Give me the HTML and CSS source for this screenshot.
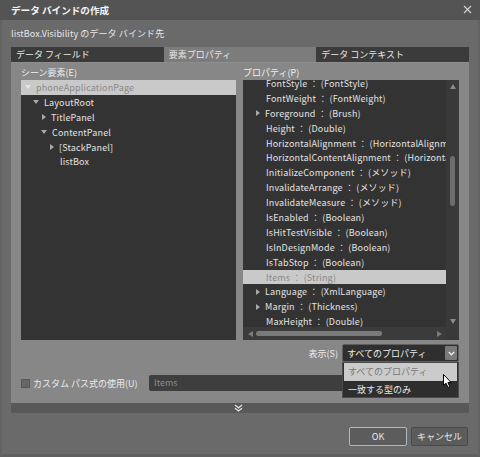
FILE: index.html
```html
<!DOCTYPE html>
<html lang="ja">
<head>
<meta charset="utf-8">
<title>データ バインドの作成</title>
<link rel="stylesheet" href="styles.css">
</head>
<body>
<div class="window">
  <div class="titlebar">
    <span class="title">データ バインドの作成</span>
    <svg class="close" width="9" height="9" viewBox="0 0 9 9"><path d="M1 1 L8 8 M8 1 L1 8" stroke="#d0d0d0" stroke-width="1.2" fill="none"/></svg>
  </div>
  <div class="content">
    <div class="target">listBox.Visibility のデータ バインド先</div>
    <div class="tabs">
      <div class="tab">データ フィールド</div>
      <div class="tab active">要素プロパティ</div>
      <div class="tab">データ コンテキスト</div>
    </div>
    <div class="panel">
      <div class="cols">
        <div class="col">
          <div class="label">シーン要素(E)</div>
          <div class="tree">
            <div class="trow selected lvl0"><span class="arr down light"></span>phoneApplicationPage</div>
            <div class="trow lvl1"><span class="arr down"></span>LayoutRoot</div>
            <div class="trow lvl2"><span class="arr right"></span>TitlePanel</div>
            <div class="trow lvl2"><span class="arr down"></span>ContentPanel</div>
            <div class="trow lvl3"><span class="arr right"></span>[StackPanel]</div>
            <div class="trow lvl3"><span class="arr none"></span>listBox</div>
          </div>
        </div>
        <div class="col">
          <div class="label">プロパティ(P)</div>
          <div class="props">
            <div class="view">
              <div class="plist">
                <div class="prow"><span class="arr none"></span>FontStyle ： (FontStyle)</div>
                <div class="prow"><span class="arr none"></span>FontWeight ： (FontWeight)</div>
                <div class="prow"><span class="arr right"></span>Foreground ： (Brush)</div>
                <div class="prow"><span class="arr none"></span>Height ： (Double)</div>
                <div class="prow"><span class="arr none"></span>HorizontalAlignment ： (HorizontalAlignment)</div>
                <div class="prow"><span class="arr none"></span>HorizontalContentAlignment ： (HorizontalAlignment)</div>
                <div class="prow"><span class="arr none"></span>InitializeComponent ： (メソッド)</div>
                <div class="prow"><span class="arr none"></span>InvalidateArrange ： (メソッド)</div>
                <div class="prow"><span class="arr none"></span>InvalidateMeasure ： (メソッド)</div>
                <div class="prow"><span class="arr none"></span>IsEnabled ： (Boolean)</div>
                <div class="prow"><span class="arr none"></span>IsHitTestVisible ： (Boolean)</div>
                <div class="prow"><span class="arr none"></span>IsInDesignMode ： (Boolean)</div>
                <div class="prow"><span class="arr none"></span>IsTabStop ： (Boolean)</div>
                <div class="prow selected"><span class="arr none"></span>Items ： (String)</div>
                <div class="prow"><span class="arr right"></span>Language ： (XmlLanguage)</div>
                <div class="prow"><span class="arr right"></span>Margin ： (Thickness)</div>
                <div class="prow"><span class="arr none"></span>MaxHeight ： (Double)</div>
              </div>
            </div>
            <div class="vscroll">
              <span class="tri up"></span>
              <div class="vtrack"><div class="vthumb"></div></div>
              <span class="tri dn"></span>
            </div>
            <div class="hscroll">
              <span class="tri lt"></span>
              <div class="htrack"><div class="hthumb"></div></div>
              <span class="tri rt"></span>
            </div>
            <div class="corner"></div>
          </div>
        </div>
      </div>
      <div class="show-row">
        <span class="show-label">表示(S)</span>
        <div class="select">
          <span class="select-text">すべてのプロパティ</span>
          <span class="select-btn">
            <svg width="7" height="5" viewBox="0 0 7 5"><path d="M0.8 1 L3.5 3.8 L6.2 1" stroke="#f0f0f0" stroke-width="1.3" fill="none"/></svg>
          </span>
          <div class="menu">
            <div class="mitem hot">すべてのプロパティ</div>
            <div class="mitem">一致する型のみ</div>
          </div>
          <svg class="cursor" width="10" height="15" viewBox="0 0 10 15"><path d="M0.5 0.5 L0.5 11.5 L3 9.2 L5 13.5 L6.8 12.7 L4.9 8.6 L8.2 8.6 Z" fill="#fff" stroke="#000" stroke-width="1"/></svg>
        </div>
      </div>
      <div class="path-row">
        <span class="check"></span>
        <span class="path-label">カスタム パス式の使用(U)</span>
        <div class="path-input">Items</div>
      </div>
      <div class="expander">
        <svg width="9" height="8" viewBox="0 0 9 8"><path d="M1 1 L4.5 3.8 L8 1 M1 4.2 L4.5 7 L8 4.2" stroke="#e0e0e0" stroke-width="1.3" fill="none"/></svg>
      </div>
    </div>
    <div class="buttons">
      <div class="btn ok">OK</div>
      <div class="btn">キャンセル</div>
    </div>
  </div>
</div>
</body>
</html>
```

FILE: styles.css
```css
* { box-sizing: border-box; margin: 0; padding: 0; }
html, body { width: 480px; height: 457px; overflow: hidden; }
body {
  font-family: "Noto Sans CJK JP", "Noto Sans", sans-serif;
  font-size: 9px;
  color: #e6e6e6;
  background: #6a6a6a;
}
.window {
  width: 480px;
  height: 457px;
  display: flex;
  flex-direction: column;
  background: #6a6a6a;
}
.titlebar {
  height: 20px;
  flex: none;
  background: #545454;
  display: flex;
  align-items: center;
  justify-content: space-between;
  padding: 0 8px 1px 11px;
}
.title { font-weight: bold; font-size: 9.6px; color: #f4f4f4; }
.close { display: block; }
.content {
  flex: 1;
  display: flex;
  flex-direction: column;
  border-left: 2px solid #636363;
  border-right: 2px solid #636363;
  border-bottom: 3px solid #5f5f5f;
  padding-left: 9px;
  padding-right: 9px;
}
.target {
  height: 27px;
  line-height: 28px;
  color: #e8e8e8;
  letter-spacing: 0.1px;
}
.tabs {
  height: 15px;
  display: flex;
}
.tab {
  flex: 1;
  background: #3b3b3b;
  line-height: 15px;
  padding-left: 5px;
  color: #e8e8e8;
}
.tab.active { background: #7c7c7c; }
.panel {
  background: #878787;
  display: flex;
  flex-direction: column;
  padding: 0 10px 0 10px;
  border-top: 1px solid #8e8e8e;
}
.cols {
  display: flex;
  gap: 7px;
}
.col { flex: 1; display: flex; flex-direction: column; }
.col:first-child { flex: 0 0 215px; }
.col:last-child { flex: 0 0 216px; }
.label {
  height: 17px;
  line-height: 19px;
  color: #f0f0f0;
}
.tree, .props {
  height: 260px;
  background: #333333;
  overflow: hidden;
}
.trow, .prow {
  height: 14.9px;
  line-height: 13px;
  white-space: nowrap;
  display: flex;
  align-items: center;
  color: #e2e2e2;
  letter-spacing: 0.15px;
}
.trow.selected, .prow.selected { background: #c9c9c9; color: #8a8a8a; }
.arr { display: inline-block; width: 0; height: 0; flex: none; }
.arr.down {
  border-left: 3px solid transparent;
  border-right: 3px solid transparent;
  border-top: 4px solid #a9a9a9;
  margin-right: 5px;
}
.arr.down.light { border-top-color: #e4e4e4; }
.arr.right {
  border-top: 3px solid transparent;
  border-bottom: 3px solid transparent;
  border-left: 4px solid #a9a9a9;
  margin-right: 5px;
  margin-left: 1px;
}
.arr.none { width: 6px; margin-right: 5px; }
.lvl0 { padding-left: 4px; }
.lvl1 { padding-left: 12px; }
.lvl2 { padding-left: 20px; }
.lvl3 { padding-left: 28px; }
.props {
  display: grid;
  grid-template-columns: 1fr 13px;
  grid-template-rows: 1fr 13px;
}
.view { overflow: hidden; }
.plist { margin-top: -4px; }
.prow { padding-left: 12px; }
.vscroll {
  background: #393939;
  display: flex;
  flex-direction: column;
  align-items: center;
  padding: 4px 0 3px;
}
.vtrack { flex: 1; width: 5px; }
.vthumb {
  margin-top: 67px;
  height: 50px;
  width: 5px;
  border-radius: 3px;
  background: #6d6d6d;
}
.hscroll {
  background: #3b3b3b;
  display: flex;
  align-items: center;
  padding: 0 4px 0 5px;
}
.htrack { flex: 1; height: 5px; }
.hthumb {
  margin-left: 3px;
  width: 126px;
  height: 5px;
  border-radius: 3px;
  background: #7a7a7a;
}
.corner { background: #393939; }
.tri { display: block; width: 0; height: 0; flex: none; }
.tri.up { border-left: 3px solid transparent; border-right: 3px solid transparent; border-bottom: 5px solid #8a8a8a; }
.tri.dn { border-left: 3px solid transparent; border-right: 3px solid transparent; border-top: 5px solid #8a8a8a; }
.tri.lt { border-top: 3px solid transparent; border-bottom: 3px solid transparent; border-right: 5px solid #7a7a7a; }
.tri.rt { border-top: 3px solid transparent; border-bottom: 3px solid transparent; border-left: 5px solid #7a7a7a; }
.show-row {
  margin-top: 4px;
  height: 18px;
  display: flex;
  justify-content: flex-end;
  align-items: center;
  gap: 4px;
}
.show-label { color: #ececec; }
.select {
  position: relative;
  width: 117px;
  height: 18px;
  background: #2f2f2f;
  border: 1px solid #5e5e5e;
  border-radius: 2px;
  display: flex;
  align-items: center;
  padding-left: 4px;
}
.select-text { flex: 1; color: #ececec; }
.select-btn {
  width: 12px;
  height: 14px;
  margin-right: 1px;
  background: #7a7a7a;
  border-radius: 1px;
  display: flex;
  align-items: center;
  justify-content: center;
}
.menu {
  position: absolute;
  top: 17px;
  left: -1px;
  width: 117px;
  height: 36px;
  background: #2e2e2e;
  border: 1px solid #4c4c4c;
  padding: 0 1px;
  z-index: 2;
}
.mitem {
  height: 17px;
  line-height: 17px;
  padding-left: 4px;
  color: #e8e8e8;
}
.mitem.hot { background: #cbcbcb; color: #7a7a7a; height: 18px; line-height: 18px; }
.cursor { position: absolute; left: 100px; top: 29px; z-index: 3; }
.path-row {
  margin-top: 13px;
  height: 16px;
  display: flex;
  align-items: center;
}
.check {
  width: 9px;
  height: 9px;
  background: #666;
  border: 1px solid #575757;
  margin-right: 3px;
  margin-top: 1px;
}
.path-label { color: #ececec; width: 116px; }
.path-input {
  flex: 1;
  height: 16px;
  background: #3e3e3e;
  border-radius: 2px;
  color: #8c8c8c;
  padding-left: 5px;
  line-height: 16px;
}
.expander {
  margin: 12px -10px 0;
  height: 10px;
  background: #585858;
  display: flex;
  justify-content: center;
  align-items: center;
}
.expander svg { display: block; margin-left: -3px; }
.buttons {
  margin-top: 14px;
  display: flex;
  justify-content: flex-end;
  gap: 4px;
  padding-right: 1px;
}
.btn {
  width: 57px;
  height: 19px;
  line-height: 17px;
  text-align: center;
  background: #5c5c5c;
  border: 1px solid #4a4a4a;
  border-radius: 2px;
  color: #e8e8e8;
}
.btn.ok { width: 58px; border-color: #a9b9c9; }
```
